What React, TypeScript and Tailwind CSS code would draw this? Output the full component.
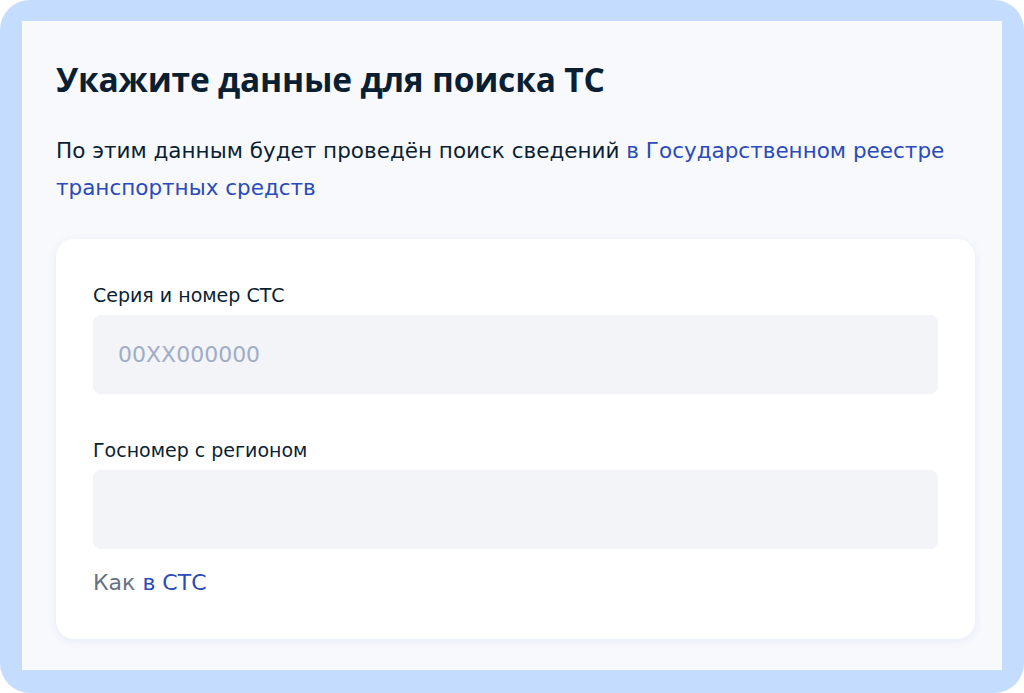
export default function App() {
  return (
    <div className="w-[1024px] h-[693px] bg-white" style={{ fontFamily: '"DejaVu Sans", "Open Sans", sans-serif' }}>
      <div className="w-full h-full rounded-[30px] bg-[#c4dcfd] pl-[22px] pr-[22px] pt-[21px] pb-[23px]">
        <div className="h-full bg-[#f7f9fd] pl-[34px] pr-[27px] pt-[36px]">
          <h1
            className="text-[33.5px] leading-[44px] font-bold text-[#0b1f33] tracking-[-0.2px]"
            style={{ fontFamily: '"Open Sans", sans-serif' }}
          >
            Укажите данные для поиска ТС
          </h1>
          <p className="mt-[31px] text-[21.5px] leading-[37px] text-[#0b1f33]">
            По этим данным будет проведён поиск сведений{' '}
            <a className="text-[#2a4bb8]">в Государственном реестре транспортных средств</a>
          </p>
          <div className="mt-[33px] bg-white rounded-[18px] shadow-[0_2px_10px_rgba(30,60,140,0.08)] px-[37px] pt-[44px] pb-[40px]">
            <Field label="Серия и номер СТС" placeholder="00XX000000" />
            <div className="mt-[44px]">
              <Field label="Госномер с регионом" placeholder="" />
            </div>
            <div className="mt-[18px] text-[22px] leading-[32px]">
              <span className="text-[#66727f]">Как </span>
              <span className="text-[#2a4bb8]">в СТС</span>
            </div>
          </div>
        </div>
      </div>
    </div>
  );
}

function Field({ label, placeholder }: { label: string; placeholder: string }) {
  return (
    <div>
      <div className="text-[19px] leading-[24px] text-[#0b1f33]">{label}</div>
      <div className="mt-[8px] h-[79px] rounded-[8px] bg-[#f2f4f8] flex items-center px-[25px]">
        <span className="text-[22px] text-[#a2acc4]">{placeholder}</span>
      </div>
    </div>
  );
}
